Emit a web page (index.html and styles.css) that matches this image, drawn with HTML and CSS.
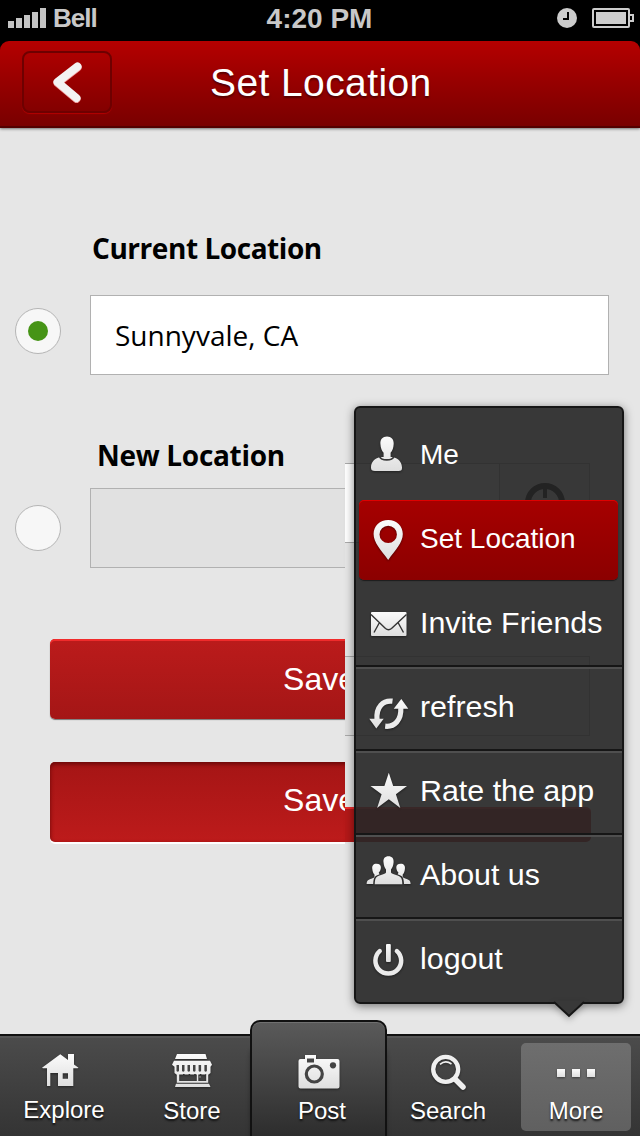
FILE: index.html
```html
<!DOCTYPE html>
<html lang="en">
<head>
<meta charset="utf-8">
<title>Set Location</title>
<link rel="stylesheet" href="styles.css">
</head>
<body>
<svg class="defs" aria-hidden="true">
  <defs>
    <linearGradient id="silver" x1="0" y1="0" x2="0" y2="1">
      <stop offset="0" stop-color="#fbfbfb"/><stop offset="1" stop-color="#dedede"/>
    </linearGradient>
  </defs>
</svg>
<div class="phone">
  <div class="status">
    <div class="carrier">
      <svg width="38" height="20" viewBox="0 0 38 20" fill="#c3c3c3"><path d="M0 13h6v7H0zM8 10h6v10H8zM16 7h6v13h-6zM24 4h6v16h-6zM32 0h6v20h-6z"/></svg>
      <span class="carrier-name">Bell</span>
    </div>
    <span class="time">4:20 PM</span>
    <div class="indicators">
      <svg width="20" height="20" viewBox="0 0 20 20"><circle cx="10" cy="10" r="10" fill="#ccc"/><path d="M11 4v7H6" fill="none" stroke="#000" stroke-width="2"/></svg>
      <svg width="42" height="20" viewBox="0 0 42 20"><rect x="1" y="1" width="36" height="18" rx="1" fill="none" stroke="#ccc" stroke-width="2"/><path d="M4 4h30v12H4zM38 6h4v8h-4v-2h2V8h-2z" fill="#ccc"/></svg>
    </div>
  </div>
  <header class="navbar">
    <div class="back">
      <svg width="32" height="44" viewBox="52 61 32 44"><path d="M77.500 66.500 57.500 82 76.500 98" fill="none" stroke="#f3f3f3" stroke-width="8" stroke-linecap="round" stroke-linejoin="round"/></svg>
    </div>
    <h1 class="title">Set Location</h1>
  </header>
  <main class="content">
    <h2 class="label label-current">Current Location</h2>
    <div class="field-row">
      <span class="radio"><span class="dot"></span></span>
      <div class="field"><span class="field-text">Sunnyvale, CA</span></div>
    </div>
    <h2 class="label label-new">New Location</h2>
    <div class="field-row">
      <span class="radio"></span>
      <div class="field field-off"></div>
    </div>
    <div class="button">Save</div>
    <div class="button button-pressed">Save</div>

    <div class="underlay">
      <div class="ghost-field">
        <div class="ghost-locate">
          <svg width="44" height="44" viewBox="0 0 44 44" fill="none" stroke="#000"><circle cx="22" cy="22" r="17" stroke-width="6"/><path d="M22 5v12M22 39V27M5 22h12M39 22H27" stroke-width="4"/></svg>
        </div>
      </div>
      <div class="ghost-box"></div>
      <div class="ghost-button"></div>
    </div>

    <nav class="menu">
      <div class="item">
        <svg class="icon" width="50" height="50" viewBox="364 430 50 50"><path d="M387 436.500c-4.400 0-6.900 3-6.600 7.200.2 4.300 1.500 7.200 3.200 9v4.800h7v-4.800c1.700-1.800 2.900-4.700 3.100-9 .2-4.200-2.400-7.200-6.700-7.200zM380 457c-5.500 1.500-9 5-9 10.500 0 2.800 1.200 3.500 4 3.500h23.500c2.700 0 3.600-.9 3.500-3.500-.2-5.500-3.500-9-9-10.500z"/><path d="M379.500 456.500c2 4.600 12.500 4.600 14.500 0" fill="none" stroke="#383838" stroke-width="1.800"/></svg>
        <span class="small">Me</span>
      </div>
      <div class="item selected">
        <svg class="icon" width="50" height="50" viewBox="364 514 50 50"><path fill-rule="evenodd" d="M388.200 520c-8.300 0-14.600 6.100-14.600 14 0 8.700 7.500 16 14.600 26 7-10 14.600-17.300 14.600-26 0-7.900-6.300-14-14.600-14zm0 5.700a8.700 8.700 0 1 1 0 17.400 8.700 8.700 0 0 1 0-17.400z"/></svg>
        <span class="small">Set Location</span>
      </div>
      <div class="item">
        <svg class="icon" width="50" height="50" viewBox="364 598 50 50"><rect x="371" y="612" width="35.500" height="24" rx="1"/><path d="M371 614.500 385.500 628.500q3 2.500 6 0L406.500 614.500M379.500 622.500 374 632.500M398 622.500 403.500 632.500" fill="none" stroke="#333" stroke-width="1.400"/></svg>
        <span class="large">Invite Friends</span>
      </div>
      <div class="item divided">
        <svg class="icon" width="50" height="50" viewBox="364 682 50 50"><path d="M392.500 701.200C383 700 376 707 377 719.500M385.200 726.200C394.500 727.200 401.500 720 400.800 708" fill="none" stroke="#ebebeb" stroke-width="5.200"/><path d="M369.300 718.700h14.400l-7.400 9.800zM401.300 699l7 9.700h-14.600z"/></svg>
        <span class="large">refresh</span>
      </div>
      <div class="item divided">
        <svg class="icon" width="50" height="50" viewBox="364 766 50 50"><path d="M388.800 772.700l4.400 13.200H407l-11.100 8.300 4.400 13.700-11.500-8.600-11.700 8.600 4.500-13.700-11.100-8.300h13.900z"/></svg>
        <span class="large">Rate the app</span>
      </div>
      <div class="item divided">
        <svg class="icon" width="50" height="50" viewBox="364 850 50 50"><path d="M388.500 856.300c-3.700 0-5.400 2.300-5 6 .3 3.500 1.400 6 2.500 7.200v3c-1 2.400-7 2-9.800 5-1.200 1.400-1.400 4.200-1.500 6.700h27.600c0-2.500-.3-5.300-1.500-6.700-2.700-3-8.700-2.600-9.800-5v-3c1.200-1.200 2.300-3.700 2.600-7.200.3-3.700-1.500-6-5.100-6z"/><path id="side" d="M376.500 863.800c-3.200 0-4.700 2-4.200 5.200.3 2.800 1.200 4.600 2.200 5.500v2.300c-1 2.200-5 1.700-6.800 3.800-.8.900-1 2-1.100 3.400h6.600c.2-3.500.5-6 2-7.500 1.200-1.200 2.900-1.700 4.400-2.300l-.9-1.400c1.100-1 2-3 2.200-5 .1-2.500-1.400-4-4.400-4z"/><use href="#side" transform="matrix(-1 0 0 1 777.200 0)"/></svg>
        <span class="large">About us</span>
      </div>
      <div class="item divided">
        <svg class="icon" width="50" height="50" viewBox="364 934 50 50"><path d="M379.700 951.100a12.900 12.900 0 1 0 17.200 0" fill="none" stroke="#ebebeb" stroke-width="4.500" stroke-linecap="round"/><rect x="386" y="944" width="4.800" height="18" rx="1"/></svg>
        <span class="large">logout</span>
      </div>
      <svg class="pointer" width="32" height="18" viewBox="0 0 32 18"><path d="M1 1 16 15 31 1V0H1z" fill="#383838"/><path d="M1 1 16 15 31 1" fill="none" stroke="#161616" stroke-width="2"/></svg>
    </nav>
  </main>
  <nav class="tabs">
    <div class="tab tab-explore">
      <svg class="icon" width="128" height="60" viewBox="0 1036 128 60"><path fill-rule="evenodd" d="M60.300 1054.300 68 1060v-6h6v10.500l4.500 3.200-1 .6h-4.200V1086H58v-13h-7.700v13H47v-17.700h-4l-1-.6zM62.700 1073.300v5.400H68v-5.400z"/></svg>
      <span>Explore</span>
    </div>
    <div class="tab">
      <svg class="icon" width="128" height="60" viewBox="128 1036 128 60"><path fill-rule="evenodd" d="M177 1054h28.500l1.500 5h-32zM174 1060.700h36l2 4-1.500 2v6.300l-2.300 1.700v8h-31.400v-8l-2.300-1.700v-6.300l-2.500-2zM179.200 1074v7h17.600v-7zM198.300 1074v7h7.900v-7zM176 1083.700h33l1.500 3.300h-35.500z"/><path d="M176.500 1071v-6h2.500v6q-1.200 1.500-2.500 0zM182 1071v-6h2.500v6q-1.200 1.500-2.500 0zM187.500 1071v-6h2.500v6q-1.200 1.500-2.500 0zM193 1071v-6h2.500v6q-1.200 1.500-2.500 0zM198.600 1071v-6h2.500v6q-1.200 1.500-2.500 0zM204.400 1071v-6h2.500v6q-1.200 1.500-2.500 0z" fill="#444"/><path d="M179 1073.500h27.500" stroke="#f0f0f0" stroke-width="2" stroke-dasharray="4 1.600"/><rect x="199.500" y="1076.500" width="1" height="1"/></svg>
      <span>Store</span>
    </div>
    <div class="tab-post">
      <svg class="icon" width="133" height="60" viewBox="252 1036 133 60"><path d="M305 1055h11v4h21.500q2 0 2 2v25.500q0 2-2 2h-37q-2 0-2-2V1061q0-2 2-2h4.500z"/><path d="M307 1058.500h7v4h-7z" fill="#444"/><circle cx="314.300" cy="1074" r="8" fill="none" stroke="#444" stroke-width="3.200"/><circle cx="333" cy="1065.300" r="3.100" fill="#444"/></svg>
      <span>Post</span>
    </div>
    <div class="tab">
      <svg class="icon" width="128" height="60" viewBox="384 1036 128 60"><g fill="none" stroke="#efefef"><circle cx="445.700" cy="1069.300" r="12.500" stroke-width="4.300"/><path d="M455 1079l8 8" stroke-width="5.500" stroke-linecap="round"/><path d="M440 1064.300q5.500-4.600 11.500-.3" stroke-width="1.600"/></g></svg>
      <span>Search</span>
    </div>
    <div class="tab tab-more">
      <div class="tab-highlight">
        <svg class="icon" width="110" height="53" viewBox="521 1043 110 53"><path d="M557 1069h8v8h-8zM572 1069h8v8h-8zM587 1069h8v8h-8z"/></svg>
        <span>More</span>
      </div>
    </div>
  </nav>
</div>
</body>
</html>
```
FILE: styles.css
```css
* { box-sizing: border-box; }
body { margin: 0; background: #000; font-family: "Liberation Sans", Arial, sans-serif; }
.defs { position: absolute; width: 0; height: 0; }
svg { display: block; }
.phone { width: 640px; height: 1136px; display: flex; flex-direction: column; overflow: hidden; }

/* Status bar */
.status { height: 41px; padding: 8px 6px 0 8px; display: grid; grid-template-columns: 1fr auto 1fr; color: #c8c8c8; font-weight: bold; }
.carrier { display: flex; gap: 7px; }
.carrier-name { font-size: 26px; line-height: 20px; letter-spacing: -1px; }
.time { margin-left: -3px; font-size: 28px; line-height: 22px; }
.indicators { display: flex; justify-content: flex-end; gap: 15px; }

/* Navigation bar */
.navbar { height: 87px; flex: none; display: flex; padding: 10px 22px; border-radius: 9px 9px 0 0; background: linear-gradient(#b50000, #990000 45%, #790000); border-bottom: 2px solid #540000; box-shadow: 0 1px 3px rgba(0,0,0,.5); position: relative; z-index: 1; }
.back { width: 90px; height: 62px; padding: 8px 0 0 28px; border: 2px solid #6e0000; border-radius: 8px; box-shadow: 0 1px 1px #b30000; }
.back svg { filter: drop-shadow(0 1px 0 #f09a9a); }
.title { margin: 0 0 0 98px; color: #fff; font-size: 39px; font-weight: normal; line-height: 64px; letter-spacing: .4px; text-shadow: 0 2px 2px rgba(60,0,0,.7); white-space: nowrap; }

/* Form */
.content { height: 906px; flex: none; position: relative; background: #e6e6e6; padding: 101px 0 0; }
.label { margin: 0; font: bold 28px/38px "Open Sans", "Noto Sans", sans-serif; color: #000; }
.label-current { padding-left: 92px; margin-bottom: 28px; letter-spacing: -.45px; }
.label-new { padding-left: 97px; margin: 61px 0 14px; letter-spacing: -.3px; }
.field-row { display: flex; align-items: center; gap: 29px; padding: 0 31px 0 15px; }
.radio { width: 46px; height: 46px; flex: none; margin-top: -8px; border: 1px solid #b5b5b5; border-radius: 50%; background: #f7f7f7; display: grid; place-items: center; }
.radio:has(+ .field-off) { margin-top: 0; }
.dot { width: 20px; height: 20px; border-radius: 50%; background: #469416; }
.field { flex: 1; height: 80px; border: 1px solid #b1b1b1; padding-left: 24px; background: #fff; font: 28px/78px "Open Sans", "Noto Sans", sans-serif; }
.field.field-off { background: #e1e1e1; }
.button { width: 541px; height: 80px; margin: 71px 0 0 50px; padding-right: 2px; border-radius: 5px; background: linear-gradient(#bb1b1b, #a41616); color: #fff; font-size: 32px; line-height: 80px; text-align: center; box-shadow: inset 0 2px #f02b2b, 0 1px 1px #777; }
.button-pressed { margin-top: 43px; line-height: 76px; background: linear-gradient(#a51515, #bd1b1b); box-shadow: inset 0 2px 4px #650707, 0 2px #fff; }

/* Layer showing through the translucent menu */
.underlay { position: absolute; left: 345px; top: 276px; width: 295px; height: 620px; background: #e6e6e6; }
.ghost-field { width: 245px; height: 80px; margin-top: 59px; border: 1px solid #aaa; border-left: 0; background: #fff; display: flex; justify-content: flex-end; }
.ghost-locate { width: 90px; border-left: 1px solid #aaa; background: #e6e6e6; display: grid; place-items: center; }
.ghost-box { width: 245px; height: 80px; margin-top: 113px; border: 1px solid #aaa; border-left: 0; background: #e1e1e1; }
.ghost-button { width: 246px; height: 35px; margin-top: 71px; background: #b51818; border-top: 2px solid #f02b2b; border-radius: 0 5px 5px 0; }

/* Menu */
.menu { position: absolute; left: 354px; top: 278px; width: 270px; height: 598px; padding-top: 5px; border: 2px solid #161616; border-radius: 6px; background: rgba(39,39,39,.91); box-shadow: 0 2px 10px rgba(0,0,0,.5); color: #fff; }
.item { height: 84px; padding: 17px 0 0 8px; display: flex; gap: 6px; line-height: 50px; white-space: nowrap; }
.small { font-size: 28px; }
.large { font-size: 30.400px; line-height: 48px; }
.icon { flex: none; fill: url(#silver); filter: drop-shadow(0 1px 1px rgba(0,0,0,.45)); }
.selected { height: 80px; margin: 3px 4px 1px 3px; padding: 14px 0 0 5px; border-radius: 5px; background: linear-gradient(#a60000, #8b0000); box-shadow: inset 0 1px #e00000, 0 1px 1px #1c1c1c; }
.divided { border-top: 2px solid #161616; padding-top: 15px; box-shadow: inset 0 2px #4f4f4f; }
.pointer { position: absolute; left: 197px; top: 593px; filter: drop-shadow(0 3px 3px rgba(0,0,0,.25)); }

/* Tab bar */
.tabs { height: 102px; flex: none; display: flex; position: relative; border-top: 2px solid #111; background: linear-gradient(#565656 2px, #4b4b4b 2px, #343434); color: #fff; font-size: 24px; text-shadow: 0 2px 2px #111; }
.tab { width: 128px; height: 100px; flex: none; display: flex; flex-direction: column; align-items: center; line-height: 30px; }
.tab .icon, .tab-post .icon { height: 60px; }
.tab-explore span { margin-top: -1px; }
.tab-post { width: 137px; height: 116px; flex: none; margin: -16px -3px 0 -6px; padding-top: 14px; display: flex; flex-direction: column; align-items: center; line-height: 30px; position: relative; border: 2px solid #111; border-bottom: 0; border-radius: 10px 10px 0 0; background: linear-gradient(#5a5a5a, #2d2d2d); box-shadow: inset 0 1px #707070, 0 26px 5px -1px rgba(0,0,0,.45); }
.tab-post span { padding-left: 7px; }
.tab-highlight { width: 110px; height: 88px; margin-top: 7px; border-radius: 5px; background: linear-gradient(#6e6e6e, #606060); display: flex; flex-direction: column; align-items: center; }
.tab-highlight .icon { height: 53px; }
```
